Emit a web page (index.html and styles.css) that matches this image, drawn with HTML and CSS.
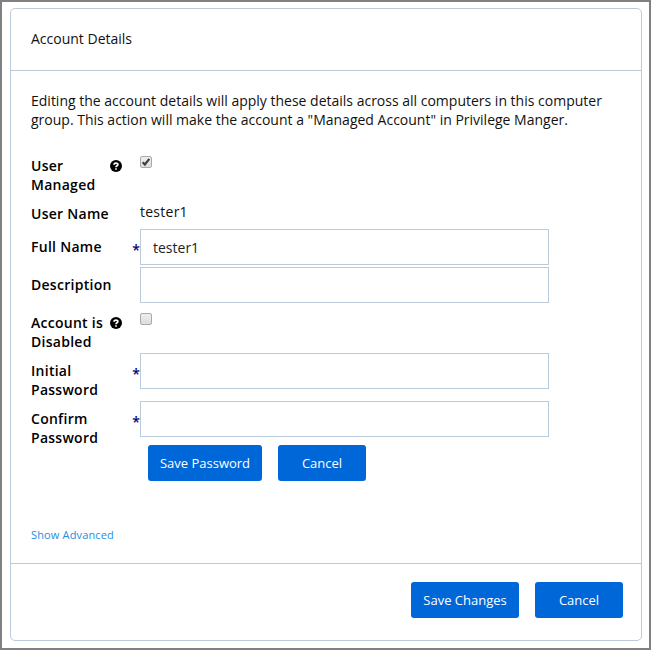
FILE: index.html
```html
<!DOCTYPE html>
<html lang="en">
<head>
<meta charset="utf-8">
<title>Account Details</title>
<link rel="stylesheet" href="styles.css">
</head>
<body>
<main class="panel">
  <header class="panel-header">Account Details</header>
  <section class="panel-body">
    <p class="intro">Editing the account details will apply these details across all computers in this computer<br>group. This action will make the account a "Managed Account" in Privilege Manger.</p>
    <form class="form">
      <div class="row tall managed">
        <label class="label">User Managed</label>
        <span class="mark"><svg class="help" viewBox="0 0 12 12"><circle cx="6" cy="6" r="6"/><path d="M4 4.7C4 2.6 7.9 2.5 7.9 4.6C7.9 5.8 6 5.8 6 7.2M6 8.2V9.8"/></svg></span>
        <span class="check"><svg viewBox="0 0 12 12"><path d="M2.7 6.2L4.9 8.5L9.3 2.9"/></svg></span>
      </div>
      <div class="row short">
        <label class="label">User Name</label>
        <span class="mark"></span>
        <span class="value">tester1</span>
      </div>
      <div class="row">
        <label class="label">Full Name</label>
        <span class="mark star">*</span>
        <input class="field" type="text" value="tester1">
      </div>
      <div class="row">
        <label class="label">Description</label>
        <span class="mark"></span>
        <input class="field" type="text">
      </div>
      <div class="row tall">
        <label class="label">Account is Disabled</label>
        <span class="mark"><svg class="help" viewBox="0 0 12 12"><circle cx="6" cy="6" r="6"/><path d="M4 4.7C4 2.6 7.9 2.5 7.9 4.6C7.9 5.8 6 5.8 6 7.2M6 8.2V9.8"/></svg></span>
        <span class="check off"></span>
      </div>
      <div class="row tall">
        <label class="label">Initial Password</label>
        <span class="mark star">*</span>
        <input class="field" type="password">
      </div>
      <div class="row last">
        <label class="label">Confirm Password</label>
        <span class="mark star">*</span>
        <input class="field" type="password">
      </div>
      <div class="actions">
        <button class="btn save-password" type="button">Save Password</button>
        <button class="btn" type="button">Cancel</button>
      </div>
    </form>
    <a class="advanced">Show Advanced</a>
  </section>
  <footer class="panel-footer">
    <button class="btn save-changes" type="button">Save Changes</button>
    <button class="btn" type="button">Cancel</button>
  </footer>
</main>
</body>
</html>
```
FILE: styles.css
```css
* { box-sizing: border-box; }
body {
  margin: 0;
  width: 651px;
  height: 650px;
  padding: 6px 7px 7px 8px;
  border: 2px solid #808080;
  background: #fff;
  color: #111;
  font: 14px/19px "Open Sans", sans-serif;
}
.panel {
  display: flex;
  flex-direction: column;
  width: 632px;
  height: 633px;
  border: 1px solid #bccbd9;
  border-radius: 5px;
}
.panel-header {
  height: 62px;
  padding: 20px 20px 0;
  border-bottom: 1px solid #bccbd9;
}
.panel-body {
  height: 492px;
  padding: 20px 20px 0;
}
.intro { margin: 0; white-space: nowrap; }
.form { margin-top: 20px; }
.row {
  display: grid;
  grid-template-columns: 78px 31px 409px;
  align-items: start;
  height: 38px;
}
.tall { height: 48px; }
.short { height: 32px; }
.last { height: 44px; }
.label {
  width: 78px;
  padding-top: 8px;
  color: #000;
  font-weight: 600;
  letter-spacing: 0.27px;
}
.managed .label,
.short .label { padding-top: 7px; }
.short .label { white-space: nowrap; }
.mark { display: block; height: 30px; padding: 11px 0 0 1px; }
.managed .mark { padding-top: 11px; }
.help { display: block; width: 12px; height: 12px; }
.help path { fill: none; stroke: #fff; stroke-width: 1.7; }
.tall .mark:not(.star) { padding-top: 12px; }
.managed .mark:not(.star) { padding-top: 11px; }
.star {
  padding: 11px 0 0;
  text-align: right;
  color: #000080;
  font-weight: 600;
}
.check {
  width: 12px;
  height: 12px;
  margin-top: 7px;
  border: 1px solid #aaa;
  border-radius: 2px;
  background: linear-gradient(#eee, #ddd);
}
.off { margin-top: 8px; }
.check svg { display: block; width: 12px; height: 12px; margin: -1px; }
.check path { fill: none; stroke: #404040; stroke-width: 2.2; }
.value { padding-top: 5px; letter-spacing: 0.25px; }
.field {
  width: 409px;
  height: 36px;
  padding: 0 12px;
  border: 1px solid #bccbd9;
  background: #fff;
  color: #222;
  font: inherit;
  outline: 0;
}
.actions { display: flex; gap: 16px; padding-left: 117px; }
.btn {
  width: 88px;
  height: 36px;
  padding: 0;
  border: 0;
  border-radius: 3px;
  background: #0067d9;
  color: #fff;
  font: 13px/18px "Open Sans", sans-serif;
}
.save-password { width: 114px; }
.save-changes { width: 108px; }
.advanced {
  display: block;
  margin-top: 44px;
  color: #1a8fe3;
  font-size: 11px;
  letter-spacing: 0.15px;
}
.panel-footer {
  display: flex;
  flex: 1;
  justify-content: flex-end;
  gap: 16px;
  padding: 18px 18px 0;
  border-top: 1px solid #bccbd9;
}
```
